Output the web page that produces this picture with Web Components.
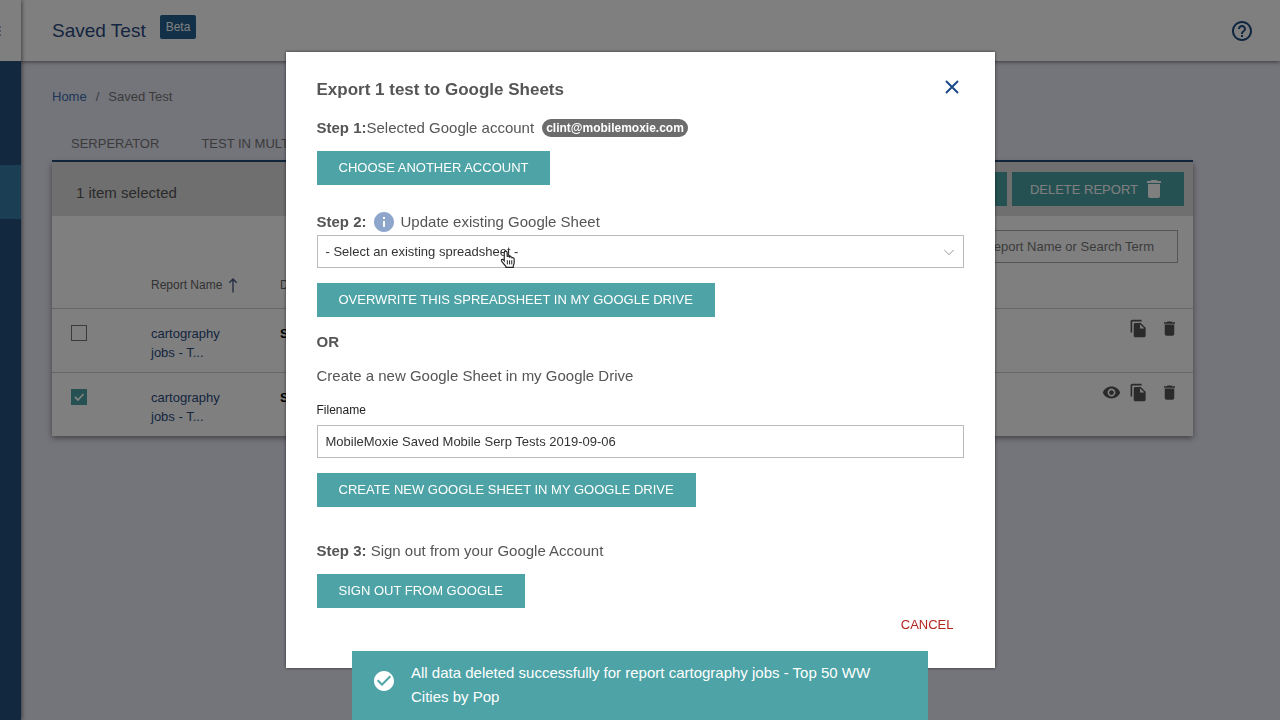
<!DOCTYPE html>
<html lang="en">
<head>
<meta charset="utf-8">
<meta name="viewport" content="width=device-width, initial-scale=1">
<title>Saved Test</title>
<style>
  body {
    margin: 0;
    font: 13px/19px "Liberation Sans", Arial, sans-serif;
    color: #555;
    background: #e8e8f6;
    --teal: #4da3a6;
    --navy: #24507c;
  }
</style>
</head>
<body>
<app-shell>
  <side-nav slot="nav"></side-nav>
  <top-bar slot="header" badge="Beta">Saved Test</top-bar>
  <bread-crumb current="Saved Test"></bread-crumb>
  <tab-strip tabs="SERPERATOR,TEST IN MULTIPLE"></tab-strip>
  <report-table></report-table>
</app-shell>
<export-dialog account="clint@mobilemoxie.com"></export-dialog>
<toast-message>All data deleted successfully for report cartography jobs - Top 50 WW Cities by Pop</toast-message>

<script>
const ICONS = {
  trash: '<path d="M6 19c0 1.1.9 2 2 2h8c1.1 0 2-.9 2-2V7H6v12zM19 4h-3.5l-1-1h-5l-1 1H5v2h14V4z"/>',
  copy: '<path d="M16 1H4c-1.1 0-2 .9-2 2v14h2V3h12V1zm-1 4l6 6v10c0 1.1-.9 2-2 2H7.99C6.89 23 6 22.1 6 21l.01-14c0-1.1.89-2 1.99-2h7zm-1 7h5.5L14 6.5V12z"/>',
  eye: '<path d="M12 4.5C7 4.5 2.73 7.61 1 12c1.73 4.39 6 7.5 11 7.5s9.27-3.11 11-7.5c-1.73-4.39-6-7.5-11-7.5zM12 17c-2.76 0-5-2.24-5-5s2.24-5 5-5 5 2.24 5 5-2.24 5-5 5zm0-8c-1.66 0-3 1.34-3 3s1.34 3 3 3 3-1.34 3-3-1.34-3-3-3z"/>',
  help: '<path d="M11 18h2v-2h-2v2zm1-16C6.48 2 2 6.48 2 12s4.48 10 10 10 10-4.48 10-10S17.52 2 12 2zm0 18c-4.41 0-8-3.59-8-8s3.59-8 8-8 8 3.59 8 8-3.59 8-8 8zm0-14c-2.21 0-4 1.79-4 4h2c0-1.1.9-2 2-2s2 .9 2 2c0 2-3 1.75-3 5h2c0-2.25 3-2.5 3-5 0-2.21-1.79-4-4-4z"/>',
  info: '<path d="M12 2C6.48 2 2 6.48 2 12s4.48 10 10 10 10-4.48 10-10S17.52 2 12 2zm1 15h-2v-6h2v6zm0-8h-2V7h2v2z"/>',
  done: '<path d="M12 2C6.48 2 2 6.48 2 12s4.48 10 10 10 10-4.48 10-10S17.52 2 12 2zm-2 15l-5-5 1.41-1.41L10 14.17l7.59-7.59L19 8l-9 9z"/>',
  close: '<path d="M6 6L18 18M18 6L6 18" fill="none" stroke="currentColor" stroke-width="2"/>',
  chevron: '<path d="M5 9l7 7 7-7" fill="none" stroke="currentColor" stroke-width="1.5"/>',
  up: '<path d="M12 22V4M7 9l5-5 5 5" fill="none" stroke="currentColor" stroke-width="1.8"/>',
  hand: '<path d="M8 2.5c1.2 0 1.8.8 1.8 1.8v5c.5-1 2.7-1 3 .4.7-.8 2.6-.6 2.8.9.9-.6 2.6-.2 2.6 1.4v4.5c0 2-1.2 2.6-1.2 5.5H8.500c0-2.7-4.9-5-5.6-8-.3-1.6 1.6-2.2 2.6-.8l.8 1V4.3c0-1 .6-1.8 1.7-1.8z" fill="#fff" stroke="#222" stroke-width="1.4"/><path d="M10 13.500v5M12.7 13.500v5M15.3 13.500v5" stroke="#222" stroke-width="1.2"/>'
};

// small helper, every element keeps its own styles in its shadow root
function render(el, css, html) {
  el.attachShadow({ mode: 'open' }).innerHTML = `<style>*{box-sizing:border-box}${css}</style>${html}`;
}

class MmIcon extends HTMLElement {
  connectedCallback() {
    if (this.shadowRoot) return;
    render(this, `
      :host { display: inline-flex; flex: none; width: 24px; height: 24px; }
      svg { width: 100%; height: 100%; fill: currentColor; }
    `, `<svg viewBox="0 0 24 24" aria-hidden="true">${ICONS[this.getAttribute('name')]}</svg>`);
  }
}
customElements.define('mm-icon', MmIcon);

class AppShell extends HTMLElement {
  constructor() {
    super();
    render(this, `
      :host { display: grid; grid-template-columns: 21px 1fr; min-height: 100vh; }
      .page { min-width: 0; }
      main { padding: 26px 87px 0 31px; }
    `, `
      <slot name="nav"></slot>
      <div class="page">
        <slot name="header"></slot>
        <main><slot></slot></main>
      </div>
    `);
  }
}
customElements.define('app-shell', AppShell);

class SideNav extends HTMLElement {
  constructor() {
    super();
    render(this, `
      :host { display: block; background: var(--navy); box-shadow: 1px 0 4px rgba(0,0,0,.5); z-index: 2; }
      .logo { height: 61px; background: #fff; display: flex; align-items: center; }
      .logo svg { width: 2px; height: 10px; }
      nav { padding-top: 50px; }
      a { display: block; height: 54px; }
      a.active { background: #387da8; }
    `, `
      <div class="logo"><svg viewBox="0 0 2 10"><path d="M0 1h1M0 5h1M0 9h1" stroke="#a0b0dc" stroke-width="2"/></svg></div>
      <nav>
        <a href="#tools" aria-label="Tools"></a>
        <a href="#saved" aria-label="Saved tests" class="active"></a>
      </nav>
    `);
  }
}
customElements.define('side-nav', SideNav);

class TopBar extends HTMLElement {
  connectedCallback() {
    if (this.shadowRoot) return;
    render(this, `
      :host { display: flex; align-items: center; height: 61px; padding: 0 26px 0 31px; background: #fff; box-shadow: 0 1px 4px rgba(0,0,0,.5); }
      h1 { margin: 0; font-size: 19px; line-height: 24px; font-weight: 400; color: #2b4a80; }
      .badge { margin: 0 auto 8px 14px; padding: 0 6px; border-radius: 2px; font-size: 12px; line-height: 24px; color: #fff; background: #246090; }
      button { display: flex; padding: 0; border: 0; background: none; color: #1d4a7e; }
    `, `
      <h1><slot></slot></h1>
      <span class="badge">${this.getAttribute('badge')}</span>
      <button aria-label="Help"><mm-icon name="help"></mm-icon></button>
    `);
  }
}
customElements.define('top-bar', TopBar);

class BreadCrumb extends HTMLElement {
  connectedCallback() {
    if (this.shadowRoot) return;
    render(this, `
      :host { display: flex; gap: 9px; line-height: 20px; color: #777; }
      a { color: #3a6cb0; text-decoration: none; }
    `, `<a href="#home">Home</a><span>/</span><span>${this.getAttribute('current')}</span>`);
  }
}
customElements.define('bread-crumb', BreadCrumb);

class TabStrip extends HTMLElement {
  connectedCallback() {
    if (this.shadowRoot) return;
    const tabs = this.getAttribute('tabs').split(',');
    render(this, `
      :host { display: flex; gap: 42px; margin-top: 26px; padding: 0 19px; border-bottom: 2px solid var(--navy); }
      a { line-height: 20px; padding: 1px 0 6px; color: #777; text-decoration: none; }
    `, tabs.map(t => `<a href="#tab">${t}</a>`).join(''));
  }
}
customElements.define('tab-strip', TabStrip);

class ActionButton extends HTMLElement {
  constructor() {
    super();
    render(this, `
      :host { display: block; }
      button { display: inline-flex; align-items: center; gap: 4px; height: 34px; padding: 0 var(--pad, 22px); border: 0; font: inherit; font-size: 13px; color: #fff; background: var(--teal); cursor: pointer; }
    `, `<button><slot></slot></button>`);
  }
}
customElements.define('action-button', ActionButton);

class ReportTable extends HTMLElement {
  constructor() {
    super();
    const row = (id, checked) => `
      <tr>
        <td class="pick"><input type="checkbox" aria-label="Select report ${id}" ${checked ? 'checked' : ''}></td>
        <td><a href="#report">cartography<br>jobs - T...</a></td>
        <td><b>SERP</b></td>
        <td class="actions"><div>
          ${checked ? '<button aria-label="View"><mm-icon name="eye"></mm-icon></button>' : ''}
          <button aria-label="Copy"><mm-icon name="copy"></mm-icon></button>
          <button aria-label="Delete"><mm-icon name="trash"></mm-icon></button>
        </div></td>
      </tr>`;
    render(this, `
      :host { display: block; background: #fff; box-shadow: 0 2px 6px rgba(0,0,0,.45); }
      .bar { display: flex; align-items: center; gap: 5px; height: 54px; padding: 0 9px 0 24px; background: #dfdfdf; }
      .bar span { margin-right: auto; padding-top: 6px; font-size: 15px; }
      .bar action-button { --pad: 18px; }
      .search { display: flex; justify-content: flex-end; padding: 14px 15px 0; }
      .search input { width: 300px; height: 33px; padding: 0 23px 0 8px; border: 1px solid #aaa; font: inherit; text-align: right; background: #fff; }
      .search input::placeholder { color: #777; opacity: 1; }
      table { width: 100%; table-layout: fixed; border-collapse: collapse; }
      th { height: 45px; padding: 0; font-size: 12px; font-weight: 400; text-align: left; color: #666; }
      th div { display: flex; align-items: center; gap: 2px; }
      th mm-icon { width: 18px; height: 18px; color: #4a5a86; }
      td { padding: 15px 0 10px; vertical-align: top; border-top: 1px solid #ccc; }
      td a { color: #2b4a80; text-decoration: none; }
      td b { color: #000; }
      .pick { padding-left: 19px; }
      .pick input { appearance: none; display: block; width: 16px; height: 16px; margin: 1px 0 0; border: 1px solid #777; }
      .pick input:checked { border-color: var(--teal); background: var(--teal) url('data:image/svg+xml,<svg xmlns="http://www.w3.org/2000/svg" viewBox="0 0 14 14"><path d="M3 7l3 3 5.5-6" fill="none" stroke="white" stroke-width="1.8"/></svg>'); }
      .actions { padding: 10px 14px 0 0; }
      .actions div { display: flex; justify-content: flex-end; gap: 12px; }
      .actions button { display: flex; padding: 0; border: 0; background: none; color: #555; }
      .actions button:nth-last-child(3) { margin-right: -4px; }
      .actions mm-icon { width: 19px; height: 19px; }
    `, `
      <div class="bar">
        <span>1 item selected</span>
        <action-button>EXPORT</action-button>
        <action-button>DELETE REPORT <mm-icon name="trash"></mm-icon></action-button>
      </div>
      <div class="search"><input type="text" aria-label="Search reports" placeholder="Report Name or Search Term"></div>
      <table>
        <colgroup><col style="width:99px"><col style="width:129px"><col><col style="width:120px"></colgroup>
        <thead><tr><th></th><th><div>Report Name <mm-icon name="up"></mm-icon></div></th><th>Date</th><th></th></tr></thead>
        <tbody>${row(1, false)}${row(2, true)}</tbody>
      </table>
    `);
  }
}
customElements.define('report-table', ReportTable);

const FIELD_CSS = `
  input, select { display: block; width: 100%; height: 33px; margin: 0; padding: 0 8px; border: 1px solid #bbb; border-radius: 0; font: inherit; color: #333; background: #fff; }
`;

class TextField extends HTMLElement {
  connectedCallback() {
    if (this.shadowRoot) return;
    render(this, `${FIELD_CSS}
      :host { display: block; }
      label { display: block; margin-bottom: 7px; font-size: 12px; line-height: 16px; color: #222; }
    `, `<label for="field">${this.getAttribute('label')}</label>
        <input id="field" type="text" value="${this.getAttribute('value')}">`);
  }
}
customElements.define('text-field', TextField);

class SelectField extends HTMLElement {
  connectedCallback() {
    if (this.shadowRoot) return;
    render(this, `${FIELD_CSS}
      :host { display: block; position: relative; }
      select { appearance: none; }
      .chevron { position: absolute; right: 7px; top: 9px; width: 16px; height: 16px; color: #999; pointer-events: none; }
      .hand { position: absolute; left: 182px; top: 14px; width: 20px; height: 20px; pointer-events: none; }
    `, `<select aria-label="${this.getAttribute('label')}"><option>${this.getAttribute('placeholder')}</option></select>
        <mm-icon class="chevron" name="chevron"></mm-icon>
        <mm-icon class="hand" name="hand"></mm-icon>`);
  }
}
customElements.define('select-field', SelectField);

class ExportDialog extends HTMLElement {
  connectedCallback() {
    if (this.shadowRoot) return;
    render(this, `
      :host { position: fixed; inset: 0; z-index: 10; display: flex; align-items: center; justify-content: center; background: rgba(0,0,0,.5); }
      section { width: 100%; max-width: 709px; padding: 23px 31px 35px; background: #fff; box-shadow: 0 0 3px rgba(0,0,0,.6); font-size: 15px; line-height: 24px; }
      header { display: flex; justify-content: space-between; align-items: flex-start; margin-bottom: 11px; }
      h2 { margin: 0; font-size: 17px; line-height: 30px; }
      .close { display: flex; padding: 0; border: 0; background: none; color: #1d4a86; }
      p { margin: 0; }
      .step { display: flex; align-items: center; }
      .chip { margin-left: 8px; padding: 0 4px; border-radius: 9px; font-size: 12px; line-height: 18px; font-weight: 700; color: #fff; background: #6c6c6c; }
      .step mm-icon { margin: 0 5px; color: #8fa6cc; }
      action-button { margin-top: 11px; }
      .two { margin-top: 25px; margin-bottom: 1px; }
      select-field + action-button, text-field + action-button { margin-top: 15px; }
      .or { margin: 13px 0 10px; }
      text-field { margin-top: 14px; font-size: 13px; line-height: 19px; }
      select-field { font-size: 13px; line-height: 19px; }
      .three { margin-top: 32px; }
      footer { display: flex; justify-content: flex-end; margin-top: 9px; padding-right: 10px; }
      .cancel { padding: 0; border: 0; font: inherit; font-size: 13px; line-height: 16px; color: #b3261e; background: none; }
    `, `
      <section role="dialog" aria-labelledby="title">
        <header>
          <h2 id="title">Export 1 test to Google Sheets</h2>
          <button class="close" aria-label="Close"><mm-icon name="close"></mm-icon></button>
        </header>
        <p class="step"><b>Step 1:</b>Selected Google account <span class="chip">${this.getAttribute('account')}</span></p>
        <action-button>CHOOSE ANOTHER ACCOUNT</action-button>
        <p class="step two"><b>Step 2:</b><mm-icon name="info"></mm-icon>Update existing Google Sheet</p>
        <select-field label="Existing spreadsheet" placeholder="- Select an existing spreadsheet -"></select-field>
        <action-button>OVERWRITE THIS SPREADSHEET IN MY GOOGLE DRIVE</action-button>
        <p class="or"><b>OR</b></p>
        <p>Create a new Google Sheet in my Google Drive</p>
        <text-field label="Filename" value="MobileMoxie Saved Mobile Serp Tests 2019-09-06"></text-field>
        <action-button>CREATE NEW GOOGLE SHEET IN MY GOOGLE DRIVE</action-button>
        <p class="three"><b>Step 3:</b> Sign out from your Google Account</p>
        <action-button>SIGN OUT FROM GOOGLE</action-button>
        <footer><button class="cancel">CANCEL</button></footer>
      </section>
    `);
  }
}
customElements.define('export-dialog', ExportDialog);

class ToastMessage extends HTMLElement {
  constructor() {
    super();
    render(this, `
      :host { position: fixed; inset: auto 0 0; z-index: 20; display: flex; justify-content: center; }
      div { display: flex; gap: 15px; width: 100%; max-width: 576px; padding: 10px 40px 11px 20px; font-size: 15px; line-height: 24px; color: #fff; background: var(--teal); }
      mm-icon { margin-top: 8px; }
    `, `<div role="status"><mm-icon name="done"></mm-icon><span><slot></slot></span></div>`);
  }
}
customElements.define('toast-message', ToastMessage);
</script>
</body>
</html>
